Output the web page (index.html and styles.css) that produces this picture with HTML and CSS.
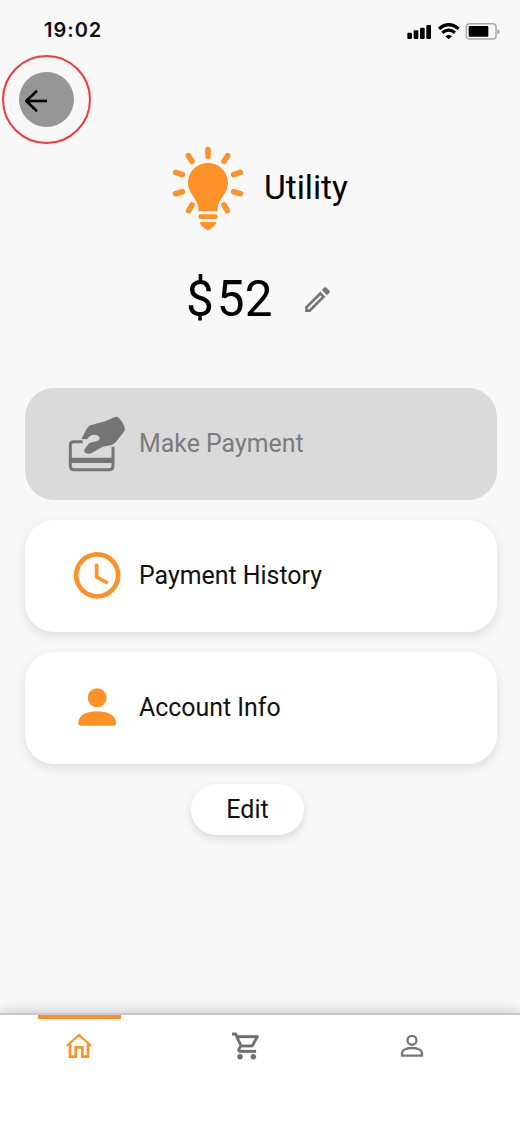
FILE: index.html
```html
<!DOCTYPE html>
<html lang="en">
<head>
<meta charset="utf-8">
<title>Utility</title>
<link rel="stylesheet" href="styles.css">
</head>
<body>
<div class="screen">
  <header class="status">
    <span class="time">19:02</span>
    <svg class="signals" viewBox="45 30 291 66">
      <g fill="#000">
        <rect x="52" y="68" width="14" height="19" rx="3"/><rect x="71" y="61" width="14" height="26" rx="3"/><rect x="90" y="53" width="14" height="34" rx="3"/><rect x="109" y="45" width="14" height="42" rx="3"/>
        <path d="M166 79Q176 71 186 79L176 88Z"/>
      </g>
      <path d="M147 56Q176 32 206 56M157 68Q176 53 195 68" fill="none" stroke="#000" stroke-width="9.500"/>
      <rect x="229" y="41" width="89" height="46" rx="10" fill="none" stroke="#a9a9a9" stroke-width="4.500"/>
      <rect x="236" y="48" width="59" height="32" rx="3" fill="#000"/>
      <path d="M322 57Q329 59 329 65Q329 71 322 73Z" fill="#a9a9a9"/>
    </svg>
  </header>
  <div class="toolbar">
    <button class="back" aria-label="Back">
      <span class="disc">
        <svg class="arrow" viewBox="0 0 24 24" fill="none" stroke="#000" stroke-width="2.600" stroke-linecap="round" stroke-linejoin="round"><path d="M12.200 2.500L2.300 12L12.200 21.500"/><path d="M3 12H23" stroke-linecap="butt"/></svg>
      </span>
    </button>
  </div>
  <div class="title">
    <svg class="bulb" viewBox="30 30 225 261">
      <g fill="#ff9129">
        <path d="M144 84C110 84 84 111 84 144C84 176 112 190 115 219V229H173V219C176 190 204 176 204 144C204 111 178 84 144 84Z"/>
        <rect x="115" y="238" width="58" height="14" rx="7"/>
        <path d="M120 261H168C168 271 160 276 155 279Q144 292 133 279C128 276 120 271 120 261Z"/>
      </g>
      <path d="M144 44V64M85 62L96 79M203 62L192 79M47 112L67 119M241 112L221 119M47 176L67 170M241 176L221 170M86 227L96 210M202 227L192 210" stroke="#ff9129" stroke-width="17" stroke-linecap="round"/>
    </svg>
    <h1 class="name">Utility</h1>
  </div>
  <div class="amount-row">
    <span class="amount"><span class="currency">$</span>52</span>
    <svg class="pencil" viewBox="0 0 24 24" fill="#777"><path d="M14.06 9.02l.92.92L5.92 19H5v-.92l9.06-9.06M17.66 3c-.25 0-.51.1-.7.29l-1.83 1.83 3.75 3.75 1.83-1.83c.39-.39.39-1.02 0-1.41l-2.34-2.34c-.2-.2-.45-.29-.71-.29zm-3.6 3.19L3 17.25V21h3.75L17.81 9.94l-3.75-3.75z"/></svg>
  </div>
  <main class="cards">
    <div class="card card-off">
      <svg class="icon" viewBox="156 103 180 174">
        <path d="M203 183H176Q166 183 166 193V255Q166 267 178 267H282Q294 267 294 255V198" fill="none" stroke="#757575" stroke-width="9"/>
        <path d="M166 239H294" stroke="#757575" stroke-width="16"/>
        <path d="M199 175L216 143Q220 136 229 133L270 122L300 109Q306 107 311 111Q329 129 330 149L303 184Q297 192 286 194L263 198L230 217Q220 222 211 217Q204 210 211 202L223 187L247 181Q257 176 252 168Q246 161 232 163Q222 166 216 176Z" fill="#757575"/>
      </svg>
      <span>Make Payment</span>
    </div>
    <div class="card">
      <svg class="icon" viewBox="156 110 180 174" fill="none" stroke="#ff9129"><circle cx="246.500" cy="195" r="63" stroke-width="14"/><path d="M245 165V200L274 216" stroke-width="11" stroke-linecap="round" stroke-linejoin="round"/></svg>
      <span>Payment History</span>
    </div>
    <div class="card">
      <svg class="icon" viewBox="156 101 180 174" fill="#ff9129"><circle cx="246.500" cy="157" r="28.500"/><path d="M190 233C190 208 217 198 246 198S303 208 303 233Q303 241 296 241H197Q190 241 190 233Z"/></svg>
      <span>Account Info</span>
    </div>
    <button class="edit">Edit</button>
  </main>
  <nav class="nav">
    <a class="tab tab-on" aria-label="Home"><svg viewBox="0 0 84 84" fill="none" stroke="#ff9129" stroke-width="8"><path d="M5 39L42 6L79 39" stroke-width="6.500"/><path d="M15 32V71H32V43H52V71H69V32"/></svg></a>
    <a class="tab" aria-label="Cart"><svg class="cart" viewBox="1 2 21 20" fill="#6f6f6f" stroke="#6f6f6f" stroke-width=".2"><path d="M15.550 13c.75 0 1.410-.41 1.750-1.030l3.580-6.490c.37-.66-.11-1.480-.87-1.480H5.210l-.94-2H1v2h2l3.600 7.590-1.350 2.440C4.520 15.370 5.480 17 7 17h12v-2H7l1.100-2h7.450zM6.160 6h12.150l-2.760 5H8.530L6.160 6zM7 18c-1.100 0-1.990.9-1.990 2S5.900 22 7 22s2-.9 2-2-.9-2-2-2zm10 0c-1.100 0-1.990.9-1.990 2s.89 2 1.990 2 2-.9 2-2-.9-2-2-2z"/></svg></a>
    <a class="tab" aria-label="Profile"><svg viewBox="0 0 84 84" fill="none" stroke="#777" stroke-width="7"><circle cx="39" cy="22" r="13.500"/><path d="M9 68V61C9 50 25 45 39 45S69 50 69 61V68Z"/></svg></a>
  </nav>
</div>
</body>
</html>
```

FILE: styles.css
```css
* { box-sizing: border-box; }
body { margin: 0; background: #f8f8f8; font-family: Roboto, sans-serif; color: #111; }
svg { display: block; flex: none; }
button { border: 0; padding: 0; font: inherit; color: inherit; }
.screen { width: 520px; height: 1126px; display: flex; flex-direction: column; overflow: hidden; }
.status { height: 55px; padding: 20px 18px 0 44px; display: flex; justify-content: space-between; align-items: flex-start; }
.time { font: 600 20px/21px Inter, sans-serif; letter-spacing: 1px; color: #111; }
.signals { width: 97px; height: 22px; }
.toolbar { padding-left: 2px; height: 90px; }
.back { display: flex; align-items: center; justify-content: center; width: 89px; height: 89px; border: 2.5px solid #fb3538; border-radius: 50%; background: transparent; }
.disc { display: flex; align-items: center; width: 55px; height: 55px; border-radius: 50%; padding: 3px 0 0 5px; background: #969696; }
.arrow { width: 24px; height: 24px; }
.title { display: flex; align-items: center; height: 87px; padding-left: 170px; gap: 19px; }
.bulb { width: 75px; height: 87px; }
.name { margin: 0 0 2px; font-size: 33.5px; line-height: 40px; font-weight: 400; color: #000; }
.amount-row { display: flex; align-items: center; height: 76px; margin-top: 29px; padding-left: 186px; }
.amount { font-size: 49.5px; line-height: 60px; width: 115px; color: #000; }
.currency { letter-spacing: 3px; }
.pencil { width: 33px; height: 33px; margin-top: 1px; }
.cards { display: flex; flex-direction: column; gap: 20px; padding: 51px 23px 0 25px; flex: 1; }
.card { display: flex; align-items: center; gap: 12px; height: 112px; padding-left: 42px; border-radius: 29px; background: #fff; box-shadow: 0 4px 12px rgba(0, 0, 0, .11); font-size: 24.9px; line-height: 30px; }
.card-off { background: #dadada; color: #7c7c7c; box-shadow: none; }
.icon { width: 60px; height: 58px; }
.edit { width: 113px; height: 51px; margin-left: 166px; border-radius: 26px; background: #fff; font-size: 25px; box-shadow: 0 4px 10px rgba(0, 0, 0, .12); }
.nav { display: flex; height: 113px; padding-left: 37px; gap: 83px; border-top: 2px solid #c8c8c8; background: #fff; box-shadow: 0 -2px 12px rgba(0, 0, 0, .18); }
.tab { width: 84px; display: flex; justify-content: center; align-items: flex-start; padding-top: 18px; }
.tab-on { background: linear-gradient(#ff9129, #ff9129) top / 83px 4px no-repeat; }
.tab svg { width: 28px; height: 28px; }
.tab .cart { margin-top: -1px; }
```
